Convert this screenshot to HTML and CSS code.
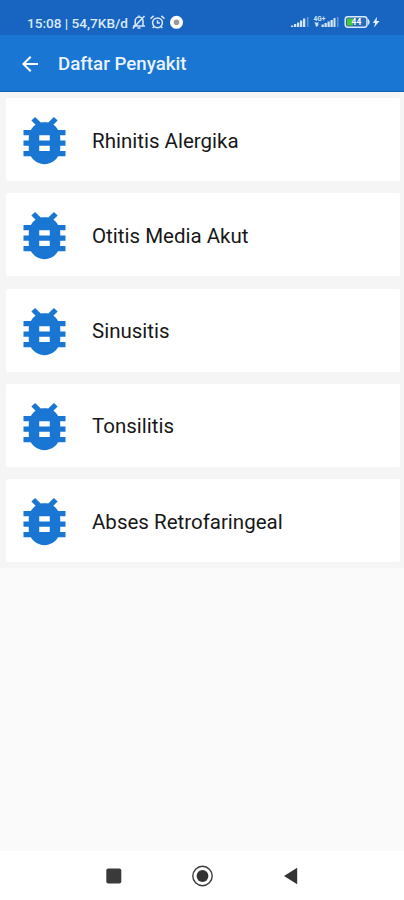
FILE: index.html
```html
<!DOCTYPE html>
<html lang="id">
<head>
<meta charset="utf-8">
<title>Daftar Penyakit</title>
<link rel="stylesheet" href="styles.css">
</head>
<body>
<svg class="defs" aria-hidden="true"><symbol id="bug" viewBox="0 0 24 24"><path d="M20 8h-2.810c-.45-.78-1.070-1.450-1.820-1.960L17 4.410 15.590 3l-2.170 2.170C12.960 5.060 12.490 5 12 5c-.49 0-.96.06-1.410.17L8.410 3 7 4.410l1.620 1.630C7.880 6.550 7.260 7.220 6.810 8H4v2h2.090c-.05.33-.09.66-.09 1v1H4v2h2v1c0 .34.04.67.09 1H4v2h2.810c1.040 1.790 2.970 3 5.190 3s4.150-1.210 5.190-3H20v-2h-2.090c.05-.33.09-.66.09-1v-1h2v-2h-2v-1c0-.34-.04-.67-.09-1H20V8zm-6 8h-4v-2h4v2zm0-4h-4v-2h4v2z"/></symbol></svg>
<header class="status">
  <span class="clock">15:08 | 54,7KB/d</span>
  <svg class="left-icons" width="54" height="16" viewBox="0 0 54 16" fill="none" stroke="#d9e8fa" stroke-width="1.500">
    <path d="M2 12h12M4.200 11.500V7a3.900 3.900 0 0 1 7.800 0v4.500M8 1.500v2M6.500 14h3M13.500 2 1.800 14.500"/>
    <circle cx="26.500" cy="8.800" r="4.900"/><path d="M26.500 6.200v2.800h2.400M19.500 4.600l3.200-2.700M33.500 4.600l-3.200-2.700M23 12.600l-1.300 1.500M30 12.600l1.300 1.500"/>
    <circle cx="45.500" cy="8.300" r="6.500" fill="#fff" stroke="none"/><circle cx="45.500" cy="8.300" r="2.800" fill="#999" stroke="none"/>
  </svg>
  <svg class="right-icons" width="92" height="18" viewBox="0 0 92 18">
    <g fill="#d3e4f8"><path d="M0 12.500h2.300V14H0zM3 11h2.300v3H3zM6 9.500h2.300V14H6zM9 7.500h2.300V14H9zM12 5.500h2.300V14H12z"/><path opacity=".4" d="M16 4h1.500v10H16z"/>
    <path d="M30.500 11.500h2.300V14h-2.300zM33.500 10h2.300v4h-2.300zM36.500 8.500h2.300V14h-2.300zM39.500 7h2.300v7h-2.300zM42.500 5h2v9h-2z"/><path opacity=".4" d="M46 4h1.500v10H46z"/><path d="M23 9.500h5l-1.500 2h1.500L25.500 14l-1.500-2.500h1z"/></g>
    <text class="net" x="22.500" y="7.500">4G+</text>
    <rect x="54.200" y="3.700" width="21.800" height="10.600" rx="2.700" fill="#286bb8" stroke="#d9eafb" stroke-width="1.500"/>
    <path d="M56 5.500h6v7h-6z" fill="#45c92e"/><path d="M77 6c2.200.8 2.200 5.200 0 6z" fill="#d9eafb"/>
    <text class="level" x="60.500" y="12">44</text>
    <path d="m86 3.800-4.200 6.200h2.400L83 14.500 88.500 8h-2.900z" fill="#e4effc"/>
  </svg>
</header>
<nav class="appbar">
  <svg width="24" height="24" viewBox="0 0 24 24"><path fill="#fff" d="M20 11H7.830l5.590-5.590L12 4l-8 8 8 8 1.410-1.410L7.830 13H20z"/></svg>
  <h1>Daftar Penyakit</h1>
</nav>
<main>
  <ul class="list">
    <li class="card"><svg class="bug"><use href="#bug"/></svg><span>Rhinitis Alergika</span></li>
    <li class="card"><svg class="bug"><use href="#bug"/></svg><span>Otitis Media Akut</span></li>
    <li class="card"><svg class="bug"><use href="#bug"/></svg><span>Sinusitis</span></li>
    <li class="card"><svg class="bug"><use href="#bug"/></svg><span>Tonsilitis</span></li>
    <li class="card"><svg class="bug"><use href="#bug"/></svg><span>Abses Retrofaringeal</span></li>
  </ul>
</main>
<footer class="sysnav">
  <svg width="24" height="24" viewBox="0 0 24 24"><rect x="4.300" y="4.500" width="15" height="15" rx="2" fill="#3a3a3a"/></svg>
  <svg width="24" height="24" viewBox="0 0 24 24"><circle cx="11.500" cy="12" r="9.700" fill="none" stroke="#3c3c3c" stroke-width="1.400"/><circle cx="11.500" cy="12" r="5.900" fill="#333"/></svg>
  <svg width="24" height="24" viewBox="0 0 24 24"><path d="M5 12 18.200 3.700v16.600z" fill="#333"/></svg>
</footer>
</body>
</html>
```
FILE: styles.css
```css
* { box-sizing: border-box; }
body {
  margin: 0;
  height: 900px;
  display: flex;
  flex-direction: column;
  font-family: Roboto, sans-serif;
  background: #fafafa;
  overflow: hidden;
}
.defs { position: absolute; width: 0; height: 0; }
.status {
  height: 35px;
  flex: none;
  display: flex;
  align-items: center;
  padding: 10px 21px 0 27px;
  background: #1765c0;
  color: #dceafb;
}
.clock { width: 104px; font-size: 13.6px; font-weight: 500; white-space: nowrap; }
.left-icons { flex: none; margin-top: -2px; }
.right-icons { flex: none; margin: -1px 0 0 auto; }
.net { font-size: 6.5px; font-weight: 700; fill: #d3e4f8; }
.level { font-size: 8.5px; font-weight: 700; fill: #fff; }
.appbar {
  height: 57px;
  flex: none;
  display: flex;
  align-items: center;
  gap: 16px;
  padding: 1px 0 0 18px;
  background: #1976d2;
  border-bottom: 1px solid #1262b8;
}
.appbar h1 { margin: 0; color: #eaf3fd; font-size: 18.7px; font-weight: 500; }
main { flex: 1; }
.list {
  list-style: none;
  margin: 0;
  padding: 6px 4px 6px 6px;
  display: grid;
  gap: 12.3px;
  background: #f5f5f5;
}
.card {
  height: 83px;
  display: flex;
  align-items: center;
  gap: 16px;
  padding: 2px 0 0 7px;
  border-radius: 2px;
  background: #fff;
  color: #181818;
  font-size: 20.5px;
}
.bug { width: 63px; height: 63px; fill: #1976d2; }
.sysnav {
  height: 49px;
  flex: none;
  display: flex;
  justify-content: space-between;
  align-items: center;
  padding: 0 101px 0 102px;
  background: #fff;
}
```
